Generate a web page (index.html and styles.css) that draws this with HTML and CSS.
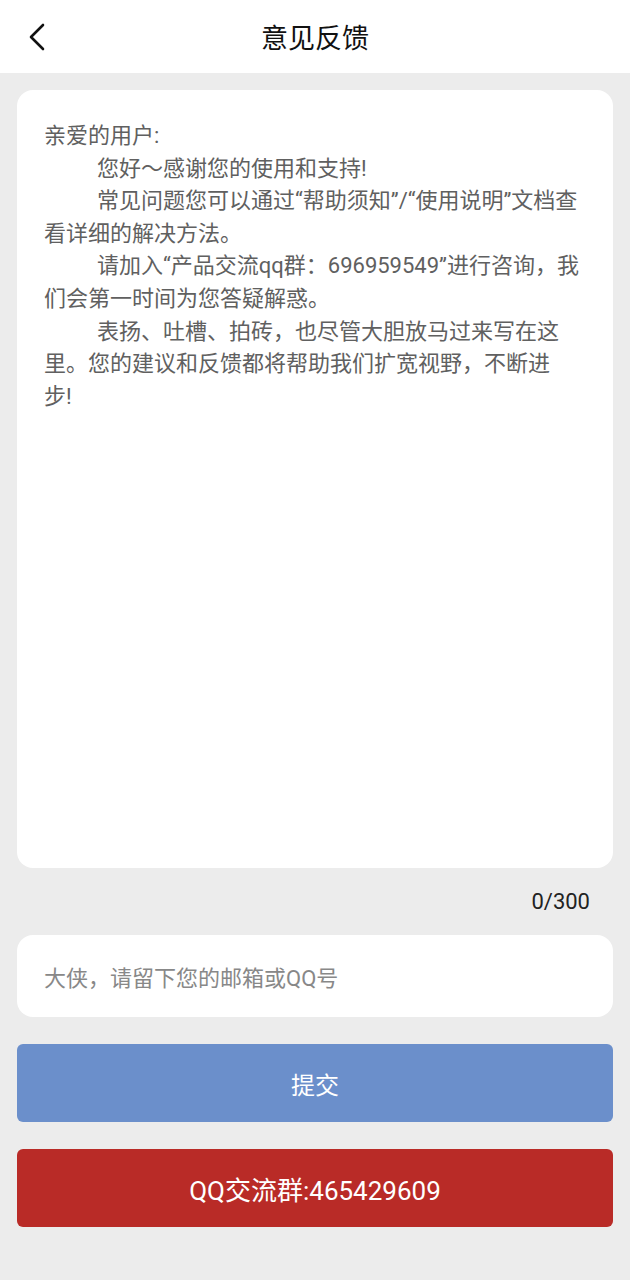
FILE: index.html
```html
<!DOCTYPE html>
<html>
    <head>
        <meta charset="UTF-8">
        <title>意见反馈</title>
        <link rel="stylesheet" href="styles.css">
    </head>
    <body>
        <header class="header">
            <span class="back">
                <svg width="20" height="30" viewBox="0 0 20 30">
                    <path d="M15 2 L3 14 L15 26" fill="none" stroke="#111" stroke-width="2.6" stroke-linecap="round" stroke-linejoin="round"/>
                </svg>
            </span>
            <h1 class="title">意见反馈</h1>
        </header>

        <div class="contents">
            <div class="card feedback">
                <p>亲爱的用户:</p>
                <p class="indent">您好～感谢您的使用和支持!</p>
                <p class="indent">常见问题您可以通过“帮助须知”/“使用说明”文档查<br>看详细的解决方法。</p>
                <p class="indent">请加入“产品交流qq群：696959549”进行咨询，我<br>们会第一时间为您答疑解惑。</p>
                <p class="indent">表扬、吐槽、拍砖，也尽管大胆放马过来写在这<br>里。您的建议和反馈都将帮助我们扩宽视野，不断进<br>步!</p>
            </div>

            <div class="count">0/300</div>

            <div class="card contact">大侠，请留下您的邮箱或QQ号</div>

            <div class="btn submit">提交</div>
            <div class="btn qq">QQ交流群:465429609</div>
        </div>
    </body>
</html>
```

FILE: styles.css
```css
* {
    box-sizing: border-box;
    font-family: "Roboto", "Noto Sans CJK SC", sans-serif;
}

body {
    margin: 0;
    background-color: #ececec;
    width: 630px;
    height: 1280px;
}

.header {
    height: 73px;
    background-color: #fff;
    display: flex;
    align-items: center;
    justify-content: center;
    position: relative;
}

.back {
    position: absolute;
    left: 28px;
    top: 23px;
}

.title {
    margin: 0;
    font-size: 27px;
    font-weight: normal;
    color: #111;
}

.contents {
    padding: 17px 17px 0;
}

.card {
    background-color: #fff;
    border-radius: 16px;
}

.feedback {
    height: 778px;
    padding: 30px 16px 0 27px;
    color: #606060;
    font-size: 22px;
    line-height: 32.6px;
    white-space: nowrap;
}

.feedback p {
    margin: 0;
}

.feedback .indent {
    text-indent: 53px;
}

.count {
    text-align: right;
    padding: 19px 23px 0 0;
    height: 67px;
    font-size: 22px;
    line-height: 30px;
    color: #222;
}

.contact {
    height: 82px;
    padding: 0 27px;
    display: flex;
    align-items: center;
    font-size: 22px;
    color: #888;
}

.btn {
    height: 78px;
    border-radius: 6px;
    color: #fff;
    display: flex;
    align-items: center;
    justify-content: center;
}

.submit {
    margin-top: 27px;
    background-color: #6b8fcb;
    font-size: 24px;
}

.qq {
    margin-top: 27px;
    background-color: #b92b27;
    font-size: 26px;
}
```
